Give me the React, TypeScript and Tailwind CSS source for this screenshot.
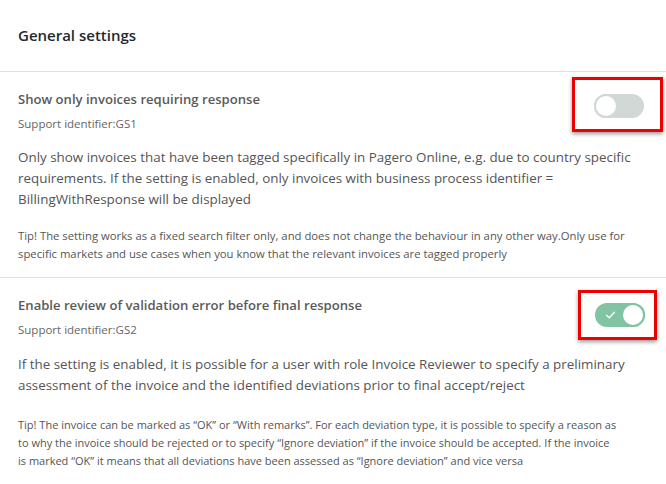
import React from "react";

const font = { fontFamily: '"Open Sans", "Noto Sans", sans-serif' };

function Toggle({ on }: { on: boolean }) {
  if (on) {
    return (
      <div className="relative h-[24px] w-[50px] rounded-full bg-[#80c4a3]">
        <svg className="absolute left-[10px] top-[7px]" width="11" height="10" viewBox="0 0 11 10">
          <path d="M1.5 5.2 L4.3 7.8 L9.5 2.2" fill="none" stroke="#ffffff" strokeWidth="1.4" strokeLinecap="round" strokeLinejoin="round" />
        </svg>
        <div className="absolute right-0 top-0 h-[24px] w-[24px] rounded-full border-2 border-[#80c4a3] bg-white" />
      </div>
    );
  }
  return (
    <div className="relative h-[24px] w-[50px] rounded-full bg-[#d2d8d5]">
      <div className="absolute left-0 top-0 h-[24px] w-[24px] rounded-full border-2 border-[#d2d8d5] bg-white" />
    </div>
  );
}

function Section({
  title,
  id,
  para,
  tip,
  on,
  boxClass,
  innerClass,
  tipClass,
}: {
  title: string;
  id: string;
  para: string[];
  tip: string[];
  on: boolean;
  boxClass: string;
  innerClass: string;
  tipClass: string;
}) {
  return (
    <div className="border-b border-[#e1e1e1] pl-[18px] pt-[17px] pb-[14px]">
      <div className="flex items-start justify-between">
        <div>
          <div className="text-[13.1px] font-semibold leading-[20px] text-[#5a5a5a] whitespace-nowrap">{title}</div>
          <div className="mt-[6px] text-[11.5px] leading-[18px] text-[#666666] whitespace-nowrap">{id}</div>
        </div>
        <div className={boxClass}>
          <div className={innerClass}>
            <Toggle on={on} />
          </div>
        </div>
      </div>
      <div className="mt-[14px] text-[13.4px] leading-[21px] text-[#555555]">
        {para.map((l, i) => (
          <div key={i} className="whitespace-nowrap">{l}</div>
        ))}
      </div>
      <div className={tipClass}>
        {tip.map((l, i) => (
          <div key={i} className="whitespace-nowrap">{l}</div>
        ))}
      </div>
    </div>
  );
}

export default function App() {
  return (
    <div className="h-[484px] w-[666px] overflow-hidden bg-white" style={font}>
      <div className="flex h-[72px] items-center border-b border-[#e1e1e1] pl-[18px]">
        <div className="text-[15px] font-semibold text-[#1f2a30]">General settings</div>
      </div>
      <Section
        title="Show only invoices requiring response"
        id="Support identifier:GS1"
        on={false}
        boxClass="-mt-[12px] mr-[3px] h-[55px] w-[91px] border-[3px] border-[#ee0000] bg-white shadow-[0_2px_4px_rgba(0,0,0,0.4)]"
        innerClass="pl-[19px] pt-[14px]"
        tipClass="mt-[17px] text-[11.3px] leading-[18px] text-[#555555]"
        para={[
          "Only show invoices that have been tagged specifically in Pagero Online, e.g. due to country specific",
          "requirements. If the setting is enabled, only invoices with business process identifier =",
          "BillingWithResponse will be displayed",
        ]}
        tip={[
          "Tip! The setting works as a fixed search filter only, and does not change the behaviour in any other way.Only use for",
          "specific markets and use cases when you know that the relevant invoices are tagged properly",
        ]}
      />
      <Section
        title="Enable review of validation error before final response"
        id="Support identifier:GS2"
        on={true}
        boxClass="-mt-[5px] mr-[9px] h-[50px] w-[79px] border-[3px] border-[#ee0000] bg-white shadow-[0_2px_4px_rgba(0,0,0,0.4)]"
        innerClass="pl-[14px] pt-[10px]"
        tipClass="mt-[20px] text-[11px] leading-[18px] text-[#555555]"
        para={[
          "If the setting is enabled, it is possible for a user with role Invoice Reviewer to specify a preliminary",
          "assessment of the invoice and the identified deviations prior to final accept/reject",
        ]}
        tip={[
          "Tip! The invoice can be marked as \u201cOK\u201d or \u201cWith remarks\u201d. For each deviation type, it is possible to specify a reason as",
          "to why the invoice should be rejected or to specify \u201cIgnore deviation\u201d if the invoice should be accepted. If the invoice",
          "is marked \u201cOK\u201d it means that all deviations have been assessed as \u201cIgnore deviation\u201d and vice versa",
        ]}
      />
    </div>
  );
}
